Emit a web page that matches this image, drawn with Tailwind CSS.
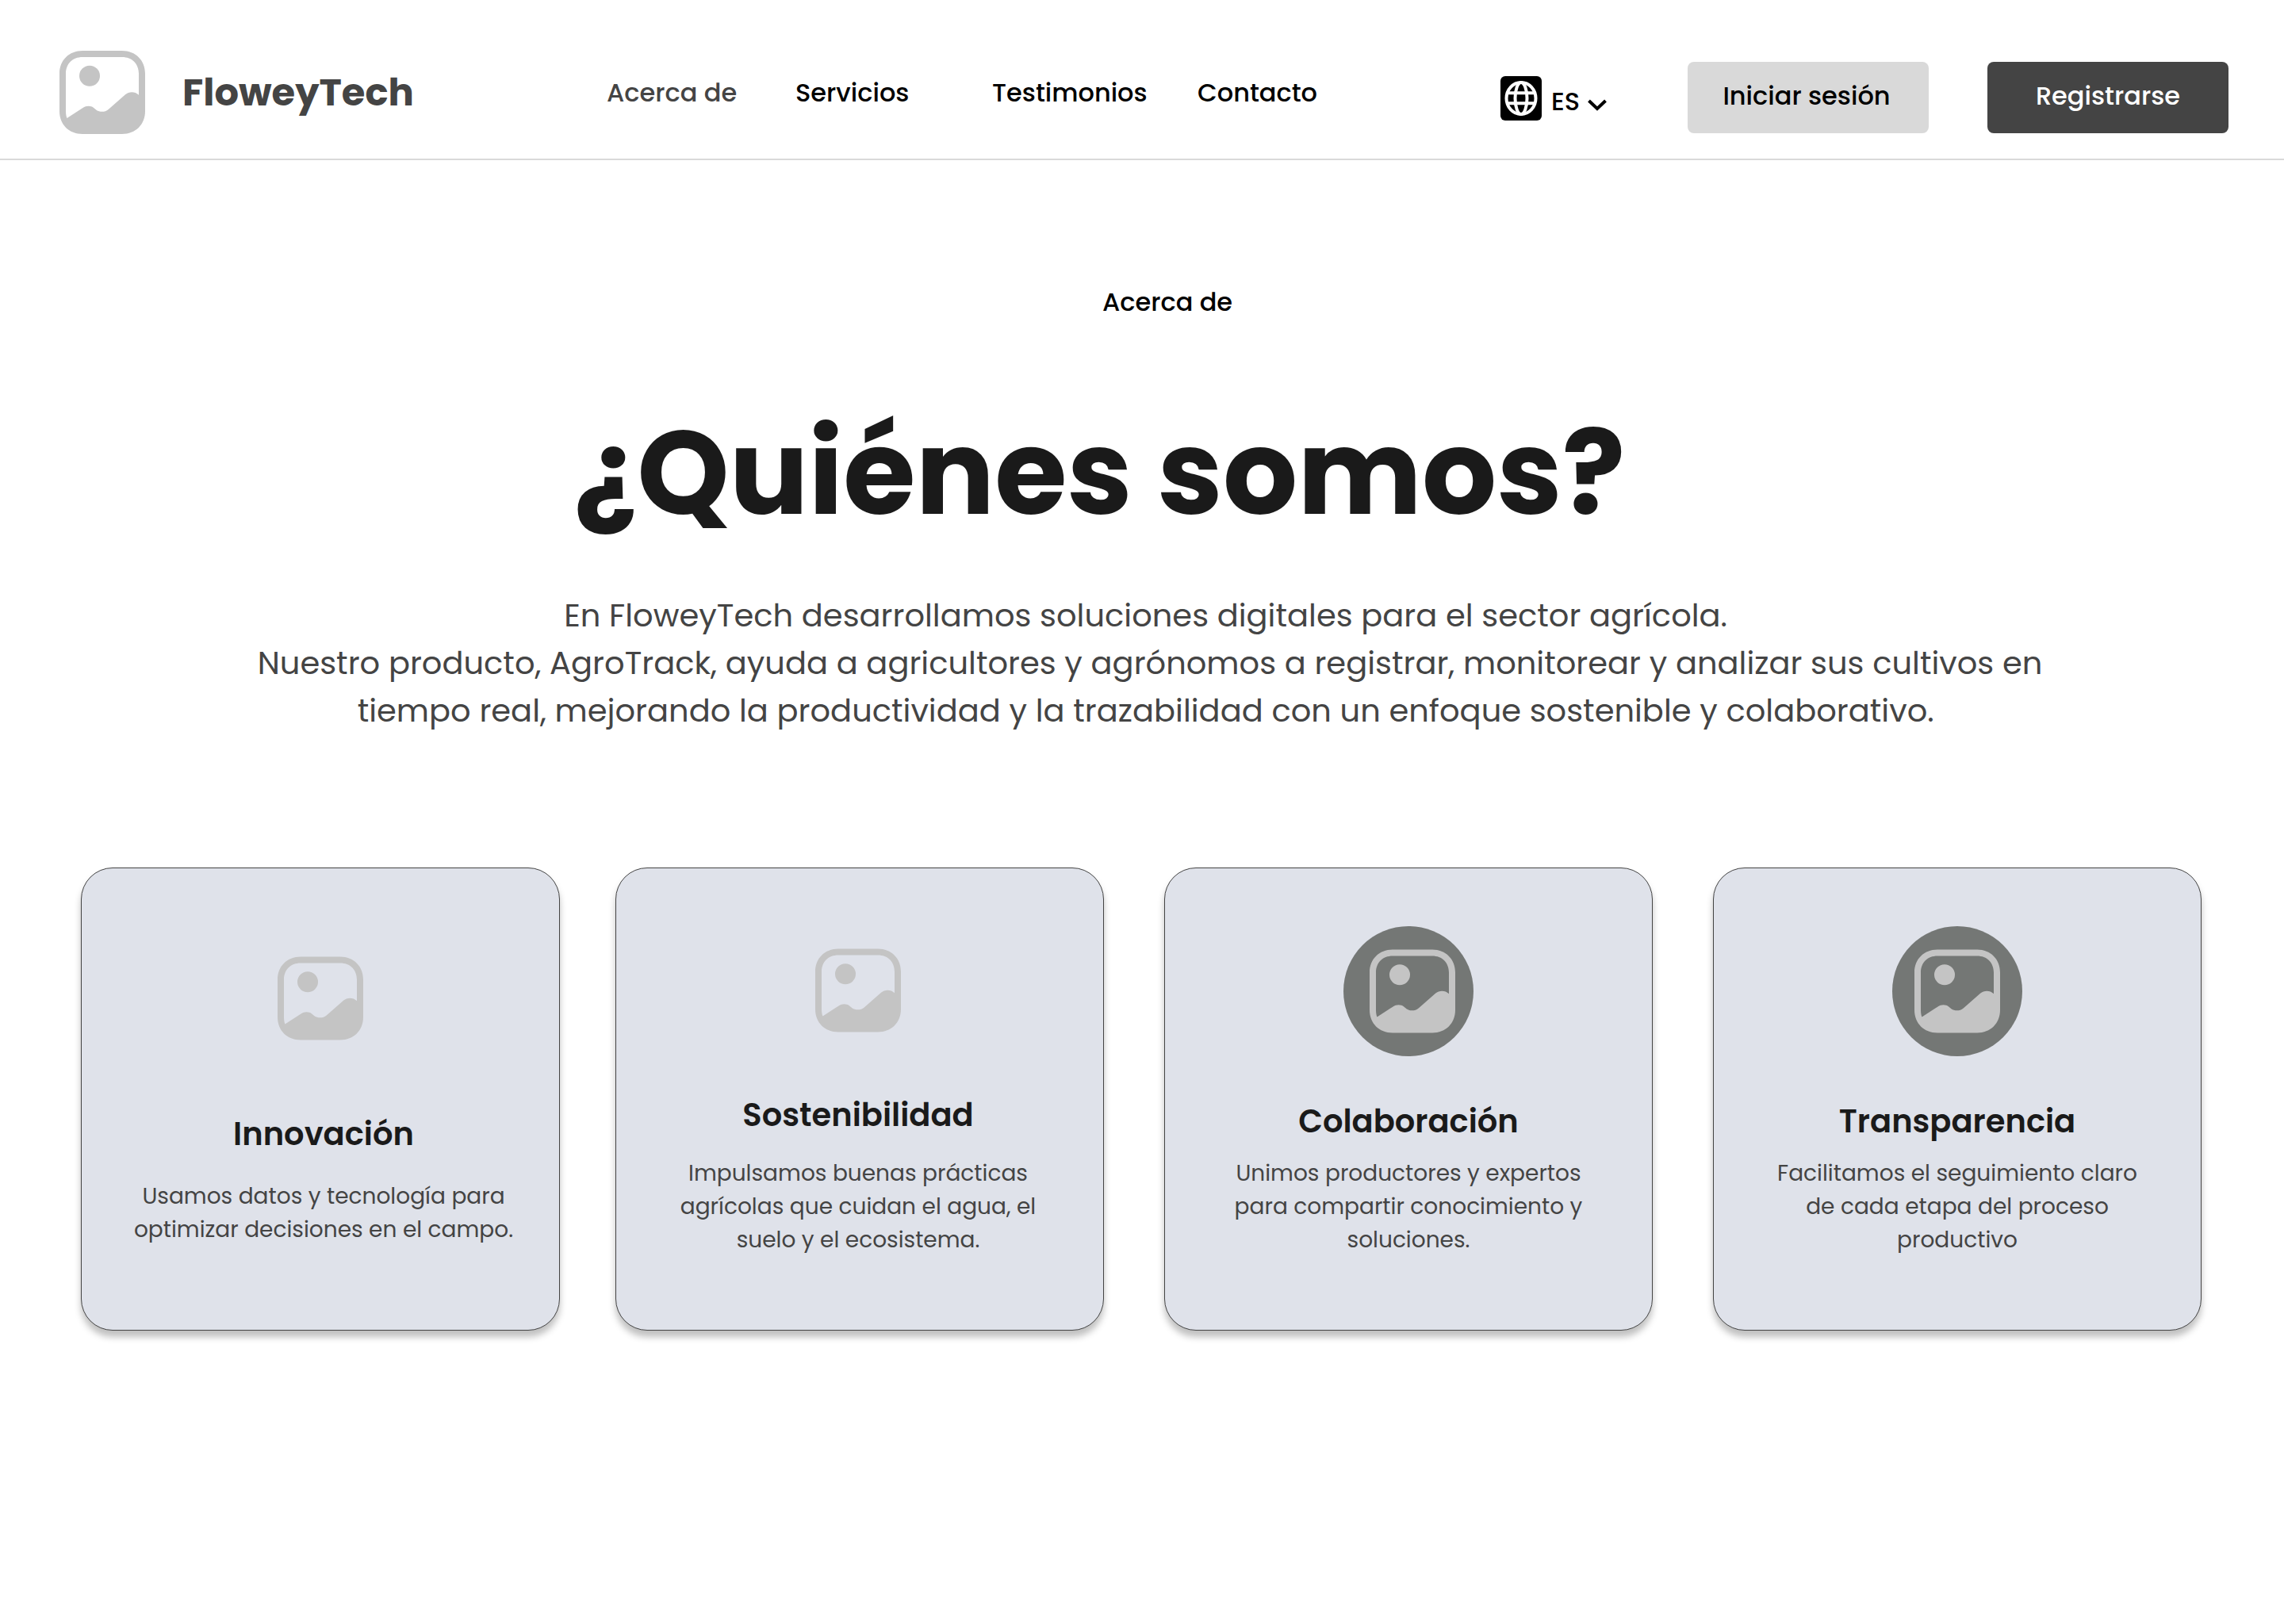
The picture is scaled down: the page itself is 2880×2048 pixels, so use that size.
<!DOCTYPE html>
<html lang="es">
<head>
<meta charset="utf-8">
<meta name="viewport" content="width=device-width, initial-scale=1">
<title>FloweyTech</title>
<script src="https://cdn.jsdelivr.net/npm/@tailwindcss/browser@4"></script>
</head>
<body class="min-h-screen bg-white font-['Poppins','Inter',sans-serif] text-black">

<!-- Shared image placeholder -->
<svg class="hidden" aria-hidden="true">
  <symbol id="picture" viewBox="0 0 108 105">
    <path fill="#c4c4c4" fill-rule="evenodd" d="M29 0H79C96 0 108 12 108 29V76C108 93 96 105 79 105H29C12 105 0 93 0 76V29C0 12 12 0 29 0ZM29 8C16.500 8 8 16.500 8 29V76C8 79.500 8.500 82.500 9.200 84.400C9.400 84.900 9.800 84.900 10.200 84.600L29.500 71.900C34 69 39.500 69 43.500 72.200L46.500 74.700C50.800 77.700 57.500 77.600 61.700 74L83 55.300C88 51.300 95 51.300 100 55.700V29C100 16.500 91.500 8 79 8Z"/>
    <circle cx="38" cy="31.700" r="13" fill="#c4c4c4"/>
  </symbol>
</svg>

<header class="grid grid-cols-[765fr_1127fr_988fr] items-center border-b-2 border-[#d9d9d9] pt-16 pb-[31px]">
  <a href="#" class="flex items-center gap-[47px] pl-[75px]">
    <svg class="h-[105px] w-[108px] shrink-0" aria-hidden="true"><use href="#picture"/></svg>
    <span class="text-5xl font-bold text-[#444444]">FloweyTech</span>
  </a>

  <nav aria-label="Principal" class="grid grid-cols-[238fr_248fr_259fr_382fr] text-[32px] leading-[48px] font-medium whitespace-nowrap">
    <a href="#acerca" aria-current="page" class="text-[#444444]">Acerca de</a>
    <a href="#servicios">Servicios</a>
    <a href="#testimonios">Testimonios</a>
    <a href="#contacto">Contacto</a>
  </nav>

  <div class="flex items-center justify-end pt-3 pr-[70px] text-[32px] leading-[48px] font-medium whitespace-nowrap">
    <div class="mr-[102px] flex items-end pt-0.5">
      <svg class="h-14 w-[52px]" viewBox="0 0 52 56" fill="none" aria-hidden="true">
        <rect width="52" height="56" rx="6" fill="#000"/>
        <g stroke="#fff" stroke-width="4">
          <ellipse cx="26" cy="28" rx="18.500" ry="20"/>
          <ellipse cx="26" cy="28" rx="7.500" ry="20"/>
          <path d="M9 21.300H43M9 34.300H43"/>
        </g>
      </svg>
      <select id="idioma" aria-label="Idioma" class="ml-3 h-12 w-9 appearance-none bg-transparent p-0">
        <option>ES</option>
      </select>
      <svg class="mb-3 ml-2.5 h-[15px] w-6" viewBox="0 0 24 15" fill="none" stroke="#000" stroke-width="4" aria-hidden="true">
        <path d="M1.500 2L12 12L22.500 2"/>
      </svg>
    </div>
    <button type="button" class="mr-[74px] h-[90px] w-[304px] rounded-lg bg-[#d9d9d9] pr-1 pb-1">Iniciar sesión</button>
    <button type="button" class="h-[90px] w-[304px] rounded-lg bg-[#444444] pb-1 text-white">Registrarse</button>
  </div>
</header>

<main class="pt-[155px] pb-16">
  <section id="acerca" class="text-center">
    <p class="pl-16 text-[32px] leading-[48px] font-medium">Acerca de</p>
    <h1 class="mt-[102px] pr-[107px] text-[148px] leading-[180px] font-bold text-[#1a1a1a]">¿Quiénes somos?</h1>
    <p class="mt-[59px] pl-5 text-[40px] leading-[60px] text-[#444444]">
      En FloweyTech desarrollamos soluciones digitales para el sector agrícola.&nbsp;<br>
      Nuestro producto, AgroTrack, ayuda a agricultores y agrónomos a registrar, monitorear y analizar sus cultivos en<br>
      tiempo real, mejorando la productividad y la trazabilidad con un enfoque sostenible y colaborativo.&nbsp;
    </p>
  </section>

  <section aria-label="Valores" class="mt-[168px] grid grid-cols-[604fr_2000fr] gap-[70px] pr-[104px] pl-[102px] text-center">
    <article class="flex flex-col items-center rounded-[40px] border border-[#444444] bg-[#dfe2ea] px-8 pt-[111px] shadow-[0_8px_8px_rgba(0,0,0,0.25)]">
      <svg class="h-[106px] w-[108px]" aria-hidden="true"><use href="#picture"/></svg>
      <div class="flex flex-col items-center pl-2">
        <h2 class="mt-[88px] text-[40px] leading-[60px] font-semibold text-[#1a1a1a]">Innovación</h2>
        <p class="mt-7 max-w-[490px] text-[28px] leading-[42px] text-[#444444]">Usamos datos y tecnología para optimizar decisiones en el campo.</p>
      </div>
    </article>

    <div class="grid grid-cols-3 gap-[76px]">
      <article class="flex flex-col items-center rounded-[40px] border border-[#444444] bg-[#dfe2ea] pt-[101px] pr-9 pb-[92px] pl-8 shadow-[0_8px_8px_rgba(0,0,0,0.25)]">
        <svg class="h-[106px] w-[108px]" aria-hidden="true"><use href="#picture"/></svg>
        <h2 class="mt-[74px] text-[40px] leading-[60px] font-semibold text-[#1a1a1a]">Sostenibilidad</h2>
        <p class="mt-[23px] max-w-[490px] text-[28px] leading-[42px] text-[#444444]">Impulsamos buenas prácticas agrícolas que cuidan el agua, el suelo y el ecosistema.</p>
      </article>

      <article class="flex flex-col items-center rounded-[40px] border border-[#444444] bg-[#dfe2ea] px-8 pt-[73px] pb-[92px] shadow-[0_8px_8px_rgba(0,0,0,0.25)]">
        <div class="flex size-[164px] items-center justify-center rounded-full bg-[#747775] pl-2.5">
          <svg class="h-[106px] w-[108px]" aria-hidden="true"><use href="#picture"/></svg>
        </div>
        <h2 class="mt-[52px] text-[40px] leading-[60px] font-semibold text-[#1a1a1a]">Colaboración</h2>
        <p class="mt-[15px] max-w-[490px] text-[28px] leading-[42px] text-[#444444]">Unimos productores y expertos para compartir conocimiento y soluciones.</p>
      </article>

      <article class="flex flex-col items-center rounded-[40px] border border-[#444444] bg-[#dfe2ea] px-8 pt-[73px] pb-[92px] shadow-[0_8px_8px_rgba(0,0,0,0.25)]">
        <div class="flex size-[164px] items-center justify-center rounded-full bg-[#747775]">
          <svg class="h-[106px] w-[108px]" aria-hidden="true"><use href="#picture"/></svg>
        </div>
        <h2 class="mt-[52px] text-[40px] leading-[60px] font-semibold text-[#1a1a1a]">Transparencia</h2>
        <p class="mt-[15px] max-w-[490px] text-[28px] leading-[42px] text-[#444444]">Facilitamos el seguimiento claro de cada etapa del proceso productivo</p>
      </article>
    </div>
  </section>
</main>
</body>
</html>
